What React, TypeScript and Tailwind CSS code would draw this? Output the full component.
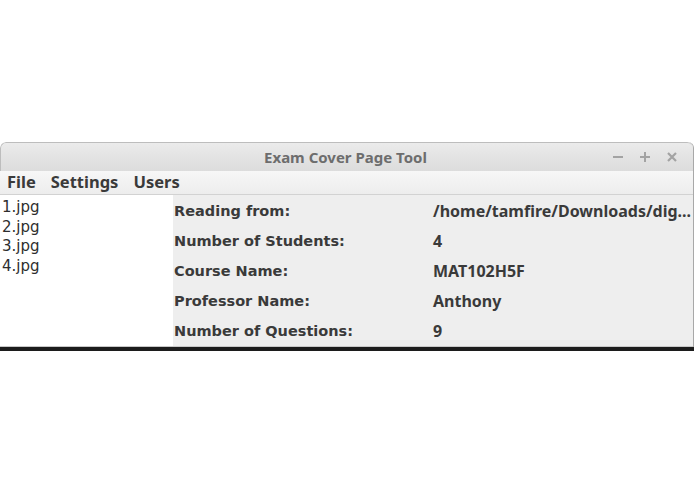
export default function App() {
  const files = ["1.jpg", "2.jpg", "3.jpg", "4.jpg"];
  const rows = [
    ["Reading from:", "/home/tamfire/Downloads/dig..."],
    ["Number of Students:", "4"],
    ["Course Name:", "MAT102H5F"],
    ["Professor Name:", "Anthony"],
    ["Number of Questions:", "9"],
  ];

  return (
    <div className="w-[695px] h-[494px] bg-white">
      <div className="pt-[142px]">
        {/* Window */}
        <div className="w-[694px] rounded-tl-[6px] rounded-tr-[6px] border-r border-[#a8a8a8] overflow-hidden">
          {/* Title bar */}
          <div className="relative h-[29px] flex items-center justify-center bg-gradient-to-b from-[#ebebeb] to-[#dcdcdc] border-t border-l border-[#bdbdbd] rounded-tl-[6px] rounded-tr-[6px]">
            <span className="text-[15px] font-bold text-[#6d6d6d] font-['Noto_Sans',sans-serif] pr-[3px]">
              Exam Cover Page Tool
            </span>
            <div className="absolute right-[14px] top-0 h-full flex items-center gap-[13px] text-[#a3a3a3]">
              <svg width="14" height="14" viewBox="0 0 14 14">
                <rect x="2" y="6" width="10" height="2" fill="currentColor" />
              </svg>
              <svg width="14" height="14" viewBox="0 0 14 14">
                <rect x="2" y="6" width="10" height="2" fill="currentColor" />
                <rect x="6" y="2" width="2" height="10" fill="currentColor" />
              </svg>
              <svg width="14" height="14" viewBox="0 0 14 14">
                <path d="M3 3 L11 11 M11 3 L3 11" stroke="currentColor" strokeWidth="2.2" />
              </svg>
            </div>
          </div>

          {/* Menu bar */}
          <div className="h-[24px] flex items-center gap-[15px] px-[7px] bg-gradient-to-b from-[#f7f7f7] to-[#ededed] border-b border-[#d2d2d2] font-['Noto_Sans',sans-serif] text-[16.5px] font-bold text-[#3a3a3a]">
            <span>File</span>
            <span>Settings</span>
            <span>Users</span>
          </div>

          {/* Content */}
          <div className="flex h-[152px] border-b border-[#c8c8c8]">
            <div className="w-[173px] bg-white pl-[2px] pt-[3px] font-['DejaVu_Sans',sans-serif] text-[15px] leading-[19.5px] text-[#2e2e2e]">
              {files.map((f) => (
                <div key={f}>{f}</div>
              ))}
            </div>
            <div className="flex-1 bg-[#eeeeee] pt-[1px]">
              {rows.map(([label, value]) => (
                <div key={label} className="h-[30px] flex items-center">
                  <span className="w-[260px] pl-[1px] pt-[2px] font-['DejaVu_Sans',sans-serif] font-bold text-[14.5px] text-[#3a3a3a]">
                    {label}
                  </span>
                  <span className="font-['Noto_Sans',sans-serif] font-bold text-[16px] text-[#3a3a3a] whitespace-nowrap">
                    {value}
                  </span>
                </div>
              ))}
            </div>
          </div>
        </div>
        <div className="w-[694px] h-[4px] bg-[#1c1c1c]" />
      </div>
    </div>
  );
}
